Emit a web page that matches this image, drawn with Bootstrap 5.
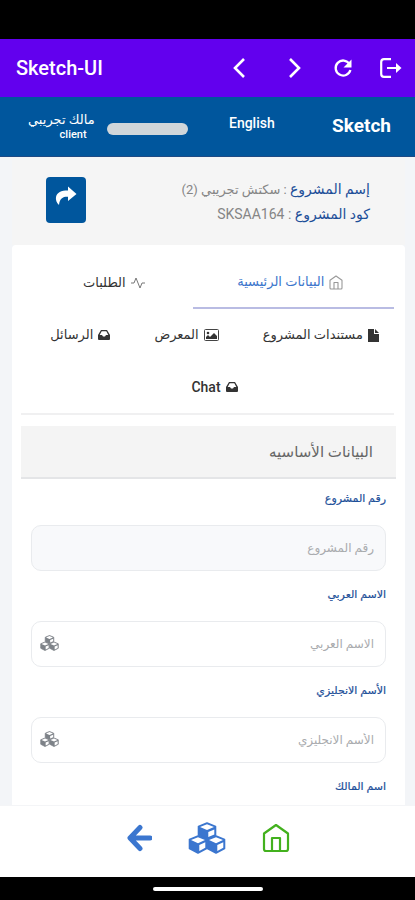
<!DOCTYPE html>
<html lang="ar" dir="rtl">
<head>
<meta charset="utf-8">
<meta name="viewport" content="width=device-width, initial-scale=1">
<title>Sketch-UI</title>
<link href="https://cdn.jsdelivr.net/npm/bootstrap@5.3.0/dist/css/bootstrap.min.css" rel="stylesheet">
<style>
body { font-family: Roboto, "DejaVu Sans", sans-serif; background: #f3f5f8; color: #333; }
svg { display: block; flex: none; }
.status-strip { height: 39px; background: #000; flex: none; }
.app-bar { height: 58px; background: #6200ee; color: #fff; flex: none; }
.app-title { font-size: 20px; font-weight: 500; }
.site-bar { height: 60px; background: #00569d; color: #fff; flex: none; border-bottom: 1px solid #1c4a86; }
.site-name { font-size: 19px; font-weight: 700; }
.icon-btn { background: none; border: 0; padding: 0; color: inherit; width: 48px; height: 48px; display: flex; align-items: center; justify-content: center; }
.site-link { font-size: 14px; font-weight: 500; line-height: 20px; }
.owner { font-size: 13px; line-height: 15px; font-weight: 500; }
.owner-role { font-size: 11px; }
.owner-bar { width: 81px; height: 12px; background: #d0d6da; }
.scroll-area { scrollbar-width: none; padding: 3px 10px 0 12px; }
.scroll-area::-webkit-scrollbar { display: none; }
.project-head { background: #f5f5f5; height: 85px; padding: 17px 35px 0 34px; }
.project-line { font-size: 14px; line-height: 24px; color: #858585; }
.project-name { font-size: 13px; }
.project-line .caption-text { font-size: 14px; color: #1d4f99; }
.share-btn { width: 40px; height: 46px; background: #00569d; color: #fff; border: 0; border-radius: 4px; }
.panel { background: #fff; border-radius: 4px; padding: 12px 9px; }
.tab-list { border-bottom: 2px solid #f0f0f1; margin: 0 2px 0 0; }
.tab-list .nav-link { height: 52px; padding: 0 0 0 14px; direction: ltr; font-size: 13px; color: #333; display: flex; align-items: center; justify-content: center; gap: 5px; }
.tab-list .nav-link:hover { color: #1d4f99; }
.tab-list .nav-link.active { color: #3c76cc; border-bottom: 2px solid #b9bce3; padding: 0 6px 0 0; }
.tab-list .nav-link.active svg { color: #999; }
.tab-list .chat-link { font-size: 14px; font-weight: 500; }
.w-main { width: 54%; } .w-orders { width: 46%; }
.w-docs { width: 43%; } .w-gallery { width: 29%; } .w-mail { width: 28%; }
.section-title { background: #f4f4f4; border-bottom: 2px solid #e4e5e7; height: 53px; margin-top: 11px; padding: 0 23px; font-size: 15px; font-weight: 400; color: #666; }
.field { padding: 0 10px; height: 96px; }
.field label { font-size: 11px; line-height: 20px; height: 36px; color: #1d4f99; display: block; -webkit-text-stroke: 0.2px #1d4f99; }
.fields { padding-top: 10px; }
.field .form-control { height: 46px; border: 1px solid #e9ebee; border-radius: 10px; font-size: 12px; padding: 0 11px; }
.field .form-control::placeholder { color: #a9abae; }
.field .form-control:disabled { background: #f8f9fb; }
.field-icon { left: 9px; top: 14px; color: #7d8288; }
.bottom-bar { height: 72px; background: #fff; flex: none; gap: 36px; border-top: 1px solid #f4f5f7; padding-bottom: 8px; }
.nav-blue { color: #3b76cf; }
.nav-green { color: #43b11e; }
.home-strip { height: 23px; background: #000; flex: none; }
.home-pill { width: 110px; height: 4px; background: #fff; }
</style>
</head>
<body>
<svg width="0" height="0" class="position-absolute" aria-hidden="true">
  <symbol id="cubes" viewBox="0 0 38 32">
    <g fill="currentColor" stroke="currentColor" stroke-width="1.6" stroke-linejoin="round">
      <path d="M19 1l8.500 3.500v8.500L19 17l-8.500-4V4.500z"/>
      <path d="M10 14l8.500 3.500v9L10 31l-8.500-4.500v-9z"/>
      <path d="M28 14l8.500 3.500v9L28 31l-8.500-4.500v-9z"/>
    </g>
    <g fill="#fff">
      <path d="M19 2.200l7 2.800-7 3-7-3zM20.300 10l6-2.600v5L20.300 15z"/>
      <path d="M10 15.200l7 2.800-7 3.200L3 18zM11.300 23l6-2.700v5.500l-6 3.200z"/>
      <path d="M28 15.200l7 2.800-7 3.200-7-3.200zM29.300 23l6-2.700v5.500l-6 3.200z"/>
    </g>
  </symbol>
  <symbol id="house" viewBox="0 0 28 30">
    <path d="M2 10.500L14 2l12 8.500V26q0 2-2 2H4q-2 0-2-2zM10 28V15h8v13" fill="none" stroke="currentColor" stroke-width="2.200" stroke-linejoin="round"/>
  </symbol>
  <symbol id="inbox" viewBox="0 0 12 10">
    <path fill="currentColor" fill-rule="evenodd" d="M3 0h6l3 5v4q0 1-1 1H1q-1 0-1-1V5zM3.700 1.300L1.700 5H4l1 1.600h2L8 5h2.300l-2-3.700z"/>
  </symbol>
</svg>

<div class="vh-100 d-flex flex-column overflow-hidden">
  <div class="status-strip"></div>

  <header class="app-bar d-flex align-items-center justify-content-between ps-3" dir="ltr">
    <span class="app-title">Sketch-UI</span>
    <div class="d-flex align-items-center">
      <button class="icon-btn me-2" aria-label="Back"><svg width="14" height="22" viewBox="0 0 14 22"><path d="M12 2L3 11l9 9" fill="none" stroke="#fff" stroke-width="2.600"/></svg></button>
      <button class="icon-btn" aria-label="Forward"><svg width="14" height="22" viewBox="0 0 14 22"><path d="M2 2l9 9-9 9" fill="none" stroke="#fff" stroke-width="2.600"/></svg></button>
      <button class="icon-btn" aria-label="Reload"><svg width="20" height="20" viewBox="0 0 20 20"><path d="M16.500 6A7.500 7.500 0 1 0 17.400 12" fill="none" stroke="#fff" stroke-width="2.300"/><path d="M18.500 1.500v8h-8z" fill="#fff"/></svg></button>
      <button class="icon-btn" aria-label="Exit"><svg width="22" height="20" viewBox="0 0 22 20"><path d="M11 1.200H4Q1.200 1.200 1.200 4v12q0 2.800 2.800 2.800h7M7 10h12" fill="none" stroke="#fff" stroke-width="2.200"/><path d="M16 5l5.500 5-5.500 5z" fill="#fff"/></svg></button>
    </div>
  </header>

  <nav class="site-bar d-flex align-items-center justify-content-between px-4" dir="ltr">
    <div class="d-flex align-items-center gap-2">
      <div class="owner text-end ps-1"><div dir="rtl">مالك تجريبي</div><div class="owner-role pe-2">client</div></div>
      <div class="owner-bar rounded-pill ms-1 mt-1"></div>
    </div>
    <a href="#" class="site-link text-white text-decoration-none pb-2">English</a>
    <a href="#" class="site-name text-white text-decoration-none ms-3">Sketch</a>
  </nav>

  <main class="scroll-area flex-grow-1 overflow-auto">
    <section class="project-head d-flex justify-content-between">
      <div>
        <div class="project-line project-name"><span class="caption-text">إسم المشروع</span> : سكتش تجريبي (2)</div>
        <div class="project-line"><span class="caption-text">كود المشروع</span> : SKSAA164</div>
      </div>
      <button class="share-btn d-flex justify-content-center pt-2" aria-label="مشاركة"><svg width="22" height="22" viewBox="0 0 22 22"><path d="M13 1.500L21.500 9 13 16v-4.300C8 11.500 4.800 13 4 20 1.500 18 .5 14.500 1 12 2 7.500 6 5.600 13 5.600z" fill="currentColor"/></svg></button>
    </section>

    <section class="panel">
      <ul class="nav tab-list p-0">
        <li class="w-main"><a href="#" class="nav-link active" aria-current="page"><span dir="rtl">البيانات الرئيسية</span><svg width="14" height="15"><use href="#house"/></svg></a></li>
        <li class="w-orders"><a href="#" class="nav-link"><span>الطلبات</span><svg width="14" height="12" viewBox="0 0 14 12"><path d="M0 6h3L5 1l4 10 2-5h3" fill="none" stroke="#777"/></svg></a></li>
        <li class="w-docs"><a href="#" class="nav-link"><span dir="rtl">مستندات المشروع</span><svg width="11" height="13" viewBox="0 0 11 13"><path d="M0 0h6v5h5v8H0zM7 0l4 4H7z" fill="#333"/></svg></a></li>
        <li class="w-gallery"><a href="#" class="nav-link"><span>المعرض</span><svg width="15" height="12" viewBox="0 0 15 12"><rect x=".5" y=".5" width="14" height="11" rx="1" fill="none" stroke="#444"/><circle cx="4" cy="4" r="1.300" fill="#333"/><path d="M2 10V8l2-2 2 2 4-4 3 3v3z" fill="#333"/></svg></a></li>
        <li class="w-mail"><a href="#" class="nav-link"><span>الرسائل</span><svg width="12" height="10"><use href="#inbox"/></svg></a></li>
        <li class="w-100"><a href="#" class="nav-link chat-link"><span>Chat</span><svg width="12" height="10"><use href="#inbox"/></svg></a></li>
      </ul>

      <h2 class="section-title d-flex align-items-center mb-0">البيانات الأساسيه</h2>

      <form class="fields">
        <div class="field"><label for="num">رقم المشروع</label><input id="num" class="form-control" placeholder="رقم المشروع" disabled></div>
        <div class="field"><label for="ar">الاسم العربي</label><div class="position-relative"><input id="ar" class="form-control" placeholder="الاسم العربي"><svg class="field-icon position-absolute" width="19" height="16"><use href="#cubes"/></svg></div></div>
        <div class="field"><label for="en">الأسم الانجليزي</label><div class="position-relative"><input id="en" class="form-control" placeholder="الأسم الانجليزي"><svg class="field-icon position-absolute" width="19" height="16"><use href="#cubes"/></svg></div></div>
        <div class="field"><label for="owner">اسم المالك</label><input id="owner" class="form-control" placeholder="اسم المالك"></div>
      </form>
    </section>
  </main>

  <nav class="bottom-bar d-flex align-items-center justify-content-center" dir="ltr">
    <a href="#" class="nav-blue" aria-label="رجوع"><svg width="26" height="28" viewBox="0 0 26 28"><path d="M14 3.500L4 14l10 10.500M4.500 14H24" fill="none" stroke="currentColor" stroke-width="5" stroke-linecap="round" stroke-linejoin="round"/></svg></a>
    <a href="#" class="nav-blue" aria-label="المشاريع"><svg width="38" height="32"><use href="#cubes"/></svg></a>
    <a href="#" class="nav-green" aria-label="الرئيسية"><svg width="28" height="30"><use href="#house"/></svg></a>
  </nav>
  <div class="home-strip d-flex align-items-center justify-content-center"><div class="home-pill rounded-pill"></div></div>
</div>
<script src="https://cdn.jsdelivr.net/npm/bootstrap@5.3.0/dist/js/bootstrap.bundle.min.js"></script>
</body>
</html>
